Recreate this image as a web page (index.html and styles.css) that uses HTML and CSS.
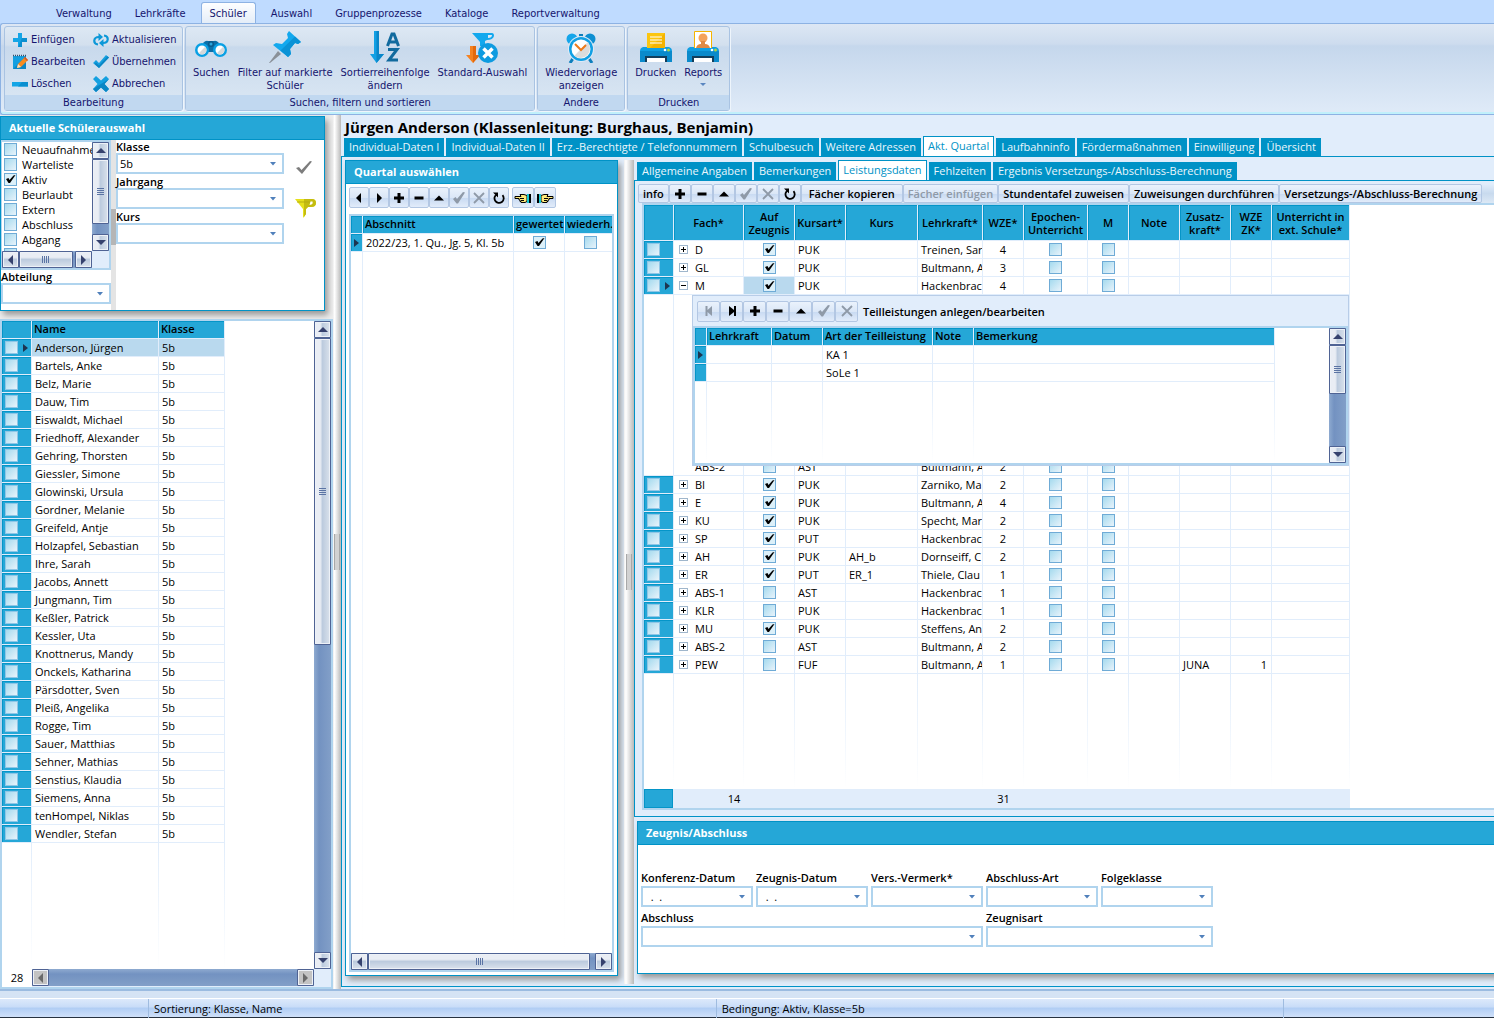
FILE: index.html
```html
<!DOCTYPE html>
<html lang="de">
<head>
<meta charset="utf-8">
<title>Schülerverwaltung</title>
<link rel="stylesheet" href="styles.css">
</head>
<body>
<svg class="defs" width="0" height="0" aria-hidden="true">
  <symbol id="i-plus" viewBox="0 0 12 12"><path d="M4.500 1h3v3.500H11v3H7.500V11h-3V7.500H1v-3h3.500z" fill="currentColor"/></symbol>
  <symbol id="i-minus" viewBox="0 0 12 12"><path d="M1.500 4.500h9v3h-9z" fill="currentColor"/></symbol>
  <symbol id="i-prev" viewBox="0 0 12 12"><path d="M8 1v10L3 6z" fill="currentColor"/></symbol>
  <symbol id="i-next" viewBox="0 0 12 12"><path d="M4 1v10l5-5z" fill="currentColor"/></symbol>
  <symbol id="i-first" viewBox="0 0 12 12"><path d="M2.500 1h2v4L9 1v10L4.500 7v4h-2z" fill="currentColor"/></symbol>
  <symbol id="i-last" viewBox="0 0 12 12"><path d="M10 1H8v4L3 1v10l5-4v4h2z" fill="currentColor"/></symbol>
  <symbol id="i-up" viewBox="0 0 12 12"><path d="M1 8.500h10L6 3.500z" fill="currentColor"/></symbol>
  <symbol id="i-check" viewBox="0 0 12 12"><path d="M0 7l2.500-2 1.500 2L10 0l2 .5L5 11.500H3.500z" fill="currentColor"/></symbol>
  <symbol id="i-cross" viewBox="0 0 12 12"><path d="M1 1l10 10M11 1L1 11" stroke="currentColor" stroke-width="1.800" fill="none"/></symbol>
  <symbol id="i-refresh" viewBox="0 0 12 12"><path d="M4 2.200A4.600 4.600 0 1 0 9.500 3.200" stroke="currentColor" stroke-width="1.800" fill="none"/><path d="M0 .5h5v5z" fill="currentColor"/></symbol>
  <symbol id="i-hand" viewBox="0 0 18 12"><path d="M1 4.500h6L6 2.500h4l3 1v6l-2 1H7V9.500H6V8H5V6.500H1z" fill="#ffe97a" stroke="#000"/><path d="M6 6.500h4M7 8.500h3" stroke="#000"/><path d="M13 2h2v9h-2z" fill="#17c9d4"/><path d="M15 2h2v9h-2z" fill="#000"/></symbol>
</svg>

<header class="ribbon">
  <nav class="ribbon-tabs" aria-label="Hauptmenü">
    <a href="#">Verwaltung</a><a href="#">Lehrkräfte</a><a href="#" class="active">Schüler</a><a href="#">Auswahl</a><a href="#">Gruppenprozesse</a><a href="#">Kataloge</a><a href="#">Reportverwaltung</a>
  </nav>
  <div class="ribbon-body">
    <section class="group">
      <div class="small-buttons">
        <button><svg viewBox="0 0 16 16"><path d="M6 1h4v5h5v4h-5v5H6v-5H1V6h5z" fill="#14a5e6"/><path d="M10 6h5v4h-5v5H6z" fill="#0a8fd0"/></svg>Einfügen</button>
        <button><svg viewBox="0 0 16 16"><path d="M5 12.500Q1 12 1.300 8.500T6 5M11 3.500q4 .5 3.700 4T10 11" fill="none" stroke="#0d98d8" stroke-width="2.200"/><path d="M5.500 1L10 5 5.500 9zM10.500 7L6 11l4.500 4z" fill="#0d98d8"/></svg>Aktualisieren</button>
        <button><svg viewBox="0 0 16 16"><path d="M1 2h13v13H1z" fill="#149fe0"/><path d="M1 15L14 2v13z" fill="#0a86c6"/><path d="M1 1.500h13" stroke="#35506b" stroke-width="1.500" stroke-dasharray="1 1"/><path d="M5 14l1-4 7-7 3 3-7 7z" fill="#f68b1f"/><path d="M5 14l1-4 3 3z" fill="#fde3c0"/><path d="M12 4l1-1 3 3-1 1z" fill="#d4552a"/></svg>Bearbeiten</button>
        <button><svg viewBox="0 0 16 16"><path d="M0 9l3-3 3 3 7-8 3 2.500L6 14z" fill="#14a0e0"/><path d="M6 14l10-10.500-1.500-1.200L6 11.500 3 8.500 1.500 10z" fill="#0b86c4"/></svg>Übernehmen</button>
        <button><svg viewBox="0 0 16 16"><path d="M0 6h16v4.500H0z" fill="#14a5e6"/><path d="M10 6h6v4.500H6z" fill="#0a8fd0"/></svg>Löschen</button>
        <button><svg viewBox="0 0 16 16"><path d="M3 0l5 4.500L13 0l3 3-4.500 5L16 13l-3 3-5-4.500L3 16l-3-3 4.500-5L0 3z" fill="#14a0e0"/><path d="M16 3l-4.500 5L16 13l-3 3-5-4.500L3 16l-3-3z" fill="#0b86c4"/></svg>Abbrechen</button>
      </div>
      <h2>Bearbeitung</h2>
    </section>
    <section class="group">
      <div class="big-buttons">
        <button><svg viewBox="0 0 32 32"><path d="M8 12q3-3 5-2h6q2-1 5 2l-3 9h-10z" fill="#0c6fa8"/><circle cx="16" cy="13" r="3" fill="#0a5b8c"/><circle cx="16" cy="13" r="1.500" fill="#2ba6df"/><circle cx="7" cy="19" r="7" fill="#0aa0e4"/><circle cx="25" cy="19" r="7" fill="#0aa0e4"/><circle cx="7" cy="19" r="4.500" fill="#fff"/><circle cx="25" cy="19" r="4.500" fill="#fff"/><path d="M10.200 15.800a4.500 4.500 0 0 1-6.400 6.400zM28.200 15.800a4.500 4.500 0 0 1-6.400 6.400z" fill="#d5d8da"/></svg>Suchen</button>
        <button><svg viewBox="0 0 32 32"><path d="M9 20l3 3L1 32H0z" fill="#8a9098"/><path d="M20 0l12 11-3 2-3-1-5 6 1 5-3 3L4 14l3-2 6 1 6-6-1-4z" fill="#12a8ee"/><path d="M26 5.500L32 11l-3 2-3-1-5 6 1 5-3 3-7.500-6.500z" fill="#0a92d6"/></svg>Filter auf markierte<br>Schüler</button>
        <button><svg viewBox="0 0 32 32"><path d="M5 0h5v23h5L7.500 32 1 23h4z" fill="#12a0e4"/><path d="M7.500 0H10v23h5L7.500 32z" fill="#0a86c8"/><path d="M18.500 15l4.500-12h2l4.500 12M20.500 11h7" fill="none" stroke="#116a9e" stroke-width="3"/><path d="M19 18.500h9L20 29h9" fill="none" stroke="#116a9e" stroke-width="3"/></svg>Sortierreihenfolge<br>ändern</button>
        <button><svg viewBox="0 0 32 32"><path d="M6 2h20q2 0 2 3-1 4-7 4l-2 1v5h-5v-4z" fill="#12a8ee"/><path d="M22 4h4q0 3-4 3z" fill="#dce7f5"/><path d="M4 15h6v9h4l-7 8-7-8h4z" fill="#f58220"/><path d="M7 15h3v9h4l-7 8z" fill="#e3690c"/><circle cx="22" cy="22" r="10" fill="#0e9be0"/><path d="M17.500 17.500l9 9M26.500 17.500l-9 9" stroke="#fff" stroke-width="3.500"/></svg>Standard-Auswahl</button>
      </div>
      <h2>Suchen, filtern und sortieren</h2>
    </section>
    <section class="group">
      <div class="big-buttons">
        <button><svg viewBox="0 0 32 32"><circle cx="7" cy="8" r="5.500" fill="#14a5ea"/><circle cx="25" cy="8" r="5.500" fill="#0d8fd2"/><path d="M14 3h4v4h-4z" fill="#0d7fbd"/><path d="M5 32l4-6M27 32l-4-6" stroke="#0d7fbd" stroke-width="3"/><circle cx="16" cy="18" r="13" fill="#dfeaf6"/><circle cx="16" cy="18" r="12" fill="#12a0e4"/><circle cx="16" cy="18" r="9.500" fill="#fff"/><path d="M22.700 11.300a9.500 9.500 0 0 1-13.400 13.400z" fill="#dcdcdc"/><path d="M10 13l6 6 5-5" fill="none" stroke="#ee7a1a" stroke-width="2"/></svg>Wiedervorlage<br>anzeigen</button>
      </div>
      <h2>Andere</h2>
    </section>
    <section class="group">
      <div class="big-buttons">
        <button><svg viewBox="0 0 32 32"><path d="M7 2h18v18H7z" fill="#fbc50f"/><path d="M25 2v18H7z" fill="#f5b400"/><path d="M10 6h12M10 9h12M10 12h12" stroke="#fff" stroke-width="1.200"/><path d="M3 16h4v-3.500V17h18v-4.500V16h4q3 1 3 4v11H0V20q0-3 3-4z" fill="#0f9fe2"/><path d="M0 20h32v11H0z" fill="#0a8acb"/><path d="M5 25h22v6H5z" fill="#123e5c"/><path d="M7 27h18v4H7z" fill="#fff"/><circle cx="25" cy="19" r="1.300" fill="#fff"/><circle cx="28.500" cy="19" r="1.500" fill="#a9d64a"/></svg>Drucken</button>
        <button><svg viewBox="0 0 32 32"><path d="M7.500.5h17v19h-17z" fill="#fff" stroke="#f5b400"/><circle cx="16" cy="7" r="4.500" fill="#f4a35c"/><path d="M9 17q1-4 5-4v-3h4v3q4 0 5 4z" fill="#e08a44"/><path d="M3 16h4v1h18v-1h4q3 1 3 4v11H0V20q0-3 3-4z" fill="#0f9fe2"/><path d="M0 20h32v11H0z" fill="#0a8acb"/><path d="M5 25h22v6H5z" fill="#123e5c"/><path d="M7 27h18v4H7z" fill="#fff"/><circle cx="25" cy="19" r="1.300" fill="#fff"/><circle cx="28.500" cy="19" r="1.500" fill="#a9d64a"/></svg>Reports<i class="caret"></i></button>
      </div>
      <h2>Drucken</h2>
    </section>
  </div>
</header>

<main class="workspace">
  <aside class="sidebar">
    <section class="panel selection">
      <h2 class="panel-title">Aktuelle Schülerauswahl</h2>
      <div class="selection-body">
        <div class="status-filter">
          <div class="status-box">
            <div class="status-top">
              <div class="status-list">
                <label><input type="checkbox">Neuaufnahme</label>
                <label><input type="checkbox">Warteliste</label>
                <label><input type="checkbox" checked>Aktiv</label>
                <label><input type="checkbox">Beurlaubt</label>
                <label><input type="checkbox">Extern</label>
                <label><input type="checkbox">Abschluss</label>
                <label><input type="checkbox">Abgang</label>
                <label><input type="checkbox" aria-label="Weitere"></label>
              </div>
              <div class="sb v"><i class="arrow up"></i><div class="track"><i class="thumb" style="height:87%"></i></div><i class="arrow down"></i></div>
            </div>
            <div class="sb h"><i class="arrow left"></i><div class="track"><i class="thumb" style="width:96%"></i></div><i class="arrow right"></i></div>
          </div>
          <label class="field"><span>Abteilung</span><select><option></option></select></label>
        </div>
        <div class="grip"></div>
        <div class="class-filter">
          <label class="field"><span>Klasse</span><select><option>5b</option></select></label>
          <label class="field"><span>Jahrgang</span><select><option></option></select></label>
          <label class="field"><span>Kurs</span><select><option></option></select></label>
        </div>
        <div class="filter-actions">
          <button aria-label="Anwenden"><svg width="18" height="16" viewBox="0 0 18 16"><path d="M1 8l3-1 2.500 3L15 1l2 .5L7 14z" fill="#7d7d7d"/></svg></button>
          <button aria-label="Filter"><svg width="22" height="20" viewBox="0 0 22 20"><path d="M0 1h17q4 0 4 4t-5 4h-3l-2 2v5l-3 4v-9z" fill="#e6e01c"/><path d="M9 1h8q4 0 4 4t-5 4h-3l-2 2v5l-2 3z" fill="#c4bc10"/><path d="M15.500 3.500h2q1 2-1 3l-2 .5z" fill="#fff"/><path d="M2 4h13" stroke="#b5ad10"/></svg></button>
        </div>
      </div>
    </section>
    <section class="student-grid">
      <div class="student-main">
        <div class="student-scroll">
          <table class="grid students">
            <colgroup><col class="w30"><col class="w127"><col class="w66"></colgroup>
            <thead><tr><th></th><th>Name</th><th>Klasse</th></tr></thead>
            <tbody id="students"></tbody>
          </table>
          <div class="fade students-fade"><i></i><i></i><i></i></div>
        </div>
        <div class="sb v"><i class="arrow up"></i><div class="track"><i class="thumb" style="height:50%"></i></div><i class="arrow down"></i></div>
      </div>
      <div class="student-foot"><output>28</output><div class="sb h disabled"><i class="arrow left"></i><div class="track"></div><i class="arrow right"></i></div></div>
    </section>
  </aside>
  <div class="splitter"></div>

  <section class="detail">
    <h1>Jürgen Anderson (Klassenleitung: Burghaus, Benjamin)</h1>
    <nav class="tabs"><a href="#">Individual-Daten I</a><a href="#">Individual-Daten II</a><a href="#">Erz.-Berechtigte / Telefonnummern</a><a href="#">Schulbesuch</a><a href="#">Weitere Adressen</a><a href="#" class="active">Akt. Quartal</a><a href="#">Laufbahninfo</a><a href="#">Fördermaßnahmen</a><a href="#">Einwilligung</a><a href="#">Übersicht</a></nav>
    <div class="tab-page">
      <section class="panel quarter">
        <h2 class="panel-title">Quartal auswählen</h2>
        <div class="quarter-body">
          <div class="toolbar narrow">
            <button aria-label="Zurück"><svg><use href="#i-prev"/></svg></button><button aria-label="Weiter"><svg><use href="#i-next"/></svg></button><button aria-label="Neu"><svg><use href="#i-plus"/></svg></button><button aria-label="Löschen"><svg><use href="#i-minus"/></svg></button><button aria-label="Bearbeiten"><svg><use href="#i-up"/></svg></button><button disabled aria-label="Übernehmen"><svg><use href="#i-check"/></svg></button><button disabled aria-label="Abbrechen"><svg><use href="#i-cross"/></svg></button><button aria-label="Aktualisieren"><svg><use href="#i-refresh"/></svg></button>
            <span class="hands"><button aria-label="Voriges Quartal"><svg class="hand"><use href="#i-hand"/></svg></button><button aria-label="Nächstes Quartal"><svg class="hand flip"><use href="#i-hand"/></svg></button></span>
          </div>
          <div class="quarter-grid">
            <table class="grid">
              <colgroup><col class="w12"><col class="w151"><col class="w51"><col class="w51"></colgroup>
              <thead><tr><th></th><th>Abschnitt</th><th>gewertet</th><th>wiederh.</th></tr></thead>
              <tbody><tr><td class="mark current"></td><td>2022/23, 1. Qu., Jg. 5, Kl. 5b</td><td class="c"><input type="checkbox" checked aria-label="gewertet"></td><td class="c"><input type="checkbox" aria-label="wiederholt"></td></tr></tbody>
            </table>
            <div class="fade quarter-fade"><i></i><i></i><i></i></div>
            <div class="sb h"><i class="arrow left"></i><div class="track"><i class="thumb" style="width:98%"></i></div><i class="arrow right"></i></div>
          </div>
        </div>
      </section>
      <div class="splitter"></div>
      <div class="quarter-detail">
        <nav class="tabs"><a href="#">Allgemeine Angaben</a><a href="#">Bemerkungen</a><a href="#" class="active">Leistungsdaten</a><a href="#">Fehlzeiten</a><a href="#">Ergebnis Versetzungs-/Abschluss-Berechnung</a></nav>
        <div class="marks">
          <div class="toolbar wide">
            <button class="text">info</button><button aria-label="Neu"><svg><use href="#i-plus"/></svg></button><button aria-label="Löschen"><svg><use href="#i-minus"/></svg></button><button aria-label="Bearbeiten"><svg><use href="#i-up"/></svg></button><button disabled aria-label="Übernehmen"><svg><use href="#i-check"/></svg></button><button disabled aria-label="Abbrechen"><svg><use href="#i-cross"/></svg></button><button aria-label="Aktualisieren"><svg><use href="#i-refresh"/></svg></button><button class="text roomy">Fächer kopieren</button><button class="text" disabled>Fächer einfügen</button><button class="text">Stundentafel zuweisen</button><button class="text">Zuweisungen durchführen</button><button class="text">Versetzungs-/Abschluss-Berechnung</button>
          </div>
          <div class="marks-grid">
            <table class="grid subjects">
              <colgroup><col class="w30"><col class="w70"><col class="w51"><col class="w51"><col class="w72"><col class="w65"><col class="w41"><col class="w64"><col class="w41"><col class="w51"><col class="w51"><col class="w41"><col class="w78"></colgroup>
              <thead><tr><th></th><th>Fach*</th><th>Auf Zeugnis</th><th>Kursart*</th><th>Kurs</th><th>Lehrkraft*</th><th>WZE*</th><th>Epochen-Unterricht</th><th>M</th><th>Note</th><th>Zusatz-<br>kraft*</th><th>WZE ZK*</th><th>Unterricht in ext. Schule*</th></tr></thead>
              <tbody id="subjects"></tbody>
            </table>
            <div class="fade subjects-cols"><i></i><i></i><i></i><i></i><i></i><i></i><i></i><i></i><i></i><i></i><i></i><i></i><i></i></div>
            <div class="sum subjects-cols"><i></i><output>14</output><output class="hours">31</output></div>
          </div>
        </div>
        <section class="panel report">
          <h2 class="panel-title">Zeugnis/Abschluss</h2>
          <div class="report-fields">
            <label class="field"><span>Konferenz-Datum</span><select><option>&nbsp; . &nbsp;.</option></select></label>
            <label class="field"><span>Zeugnis-Datum</span><select><option>&nbsp; . &nbsp;.</option></select></label>
            <label class="field"><span>Vers.-Vermerk*</span><select><option></option></select></label>
            <label class="field"><span>Abschluss-Art</span><select><option></option></select></label>
            <label class="field"><span>Folgeklasse</span><select><option></option></select></label>
            <label class="field span3"><span>Abschluss</span><select><option></option></select></label>
            <label class="field span2"><span>Zeugnisart</span><select><option></option></select></label>
          </div>
        </section>
      </div>
    </div>
  </section>
</main>

<footer>
  <div class="strip"></div>
  <div class="statusbar"><span></span><span>Sortierung: Klasse, Name</span><span>Bedingung: Aktiv, Klasse=5b</span><span></span></div>
</footer>

<template id="parts">
  <div class="parts">
    <div class="toolbar parts-bar">
      <button disabled aria-label="Erste"><svg><use href="#i-first"/></svg></button><button aria-label="Letzte"><svg><use href="#i-last"/></svg></button><button aria-label="Neu"><svg><use href="#i-plus"/></svg></button><button aria-label="Löschen"><svg><use href="#i-minus"/></svg></button><button aria-label="Bearbeiten"><svg><use href="#i-up"/></svg></button><button disabled aria-label="Übernehmen"><svg><use href="#i-check"/></svg></button><button disabled aria-label="Abbrechen"><svg><use href="#i-cross"/></svg></button>
      <strong>Teilleistungen anlegen/bearbeiten</strong>
    </div>
    <div class="parts-body">
      <div class="parts-list">
        <table class="grid">
          <colgroup><col class="w12"><col class="w65"><col class="w51"><col class="w110"><col class="w41"><col class="w301"></colgroup>
          <thead><tr><th></th><th>Lehrkraft</th><th>Datum</th><th>Art der Teilleistung</th><th>Note</th><th>Bemerkung</th></tr></thead>
          <tbody><tr><td class="mark current"></td><td></td><td></td><td>KA 1</td><td></td><td></td></tr><tr><td class="mark"></td><td></td><td></td><td>SoLe 1</td><td></td><td></td></tr></tbody>
        </table>
        <div class="fade parts-fade"><i></i><i></i><i></i><i></i><i></i><i></i></div>
      </div>
      <div class="sb v"><i class="arrow up"></i><div class="track"><i class="thumb" style="height:49%"></i></div><i class="arrow down"></i></div>
    </div>
  </div>
</template>
<script src="app.js"></script>
</body>
</html>
```
FILE: app.js
```js
const students = ['Anderson, Jürgen', 'Bartels, Anke', 'Belz, Marie', 'Dauw, Tim', 'Eiswaldt, Michael', 'Friedhoff, Alexander', 'Gehring, Thorsten', 'Giessler, Simone', 'Glowinski, Ursula', 'Gordner, Melanie', 'Greifeld, Antje', 'Holzapfel, Sebastian', 'Ihre, Sarah', 'Jacobs, Annett', 'Jungmann, Tim', 'Keßler, Patrick', 'Kessler, Uta', 'Knottnerus, Mandy', 'Onckels, Katharina', 'Pärsdotter, Sven', 'Pleiß, Angelika', 'Rogge, Tim', 'Sauer, Matthias', 'Sehner, Mathias', 'Senstius, Klaudia', 'Siemens, Anna', 'tenHompel, Niklas', 'Wendler, Stefan'];

// Fach, auf Zeugnis, Kursart, Kurs, Lehrkraft, WZE, Zusatzkraft, WZE ZK
const subjects = [
  ['D', 1, 'PUK', '', 'Treinen, Sar', 4],
  ['GL', 1, 'PUK', '', 'Bultmann, A', 3],
  ['M', 1, 'PUK', '', 'Hackenbrac', 4],
  ['ABS-2', 0, 'AST', '', 'Bultmann, A', 2],
  ['BI', 1, 'PUK', '', 'Zarniko, Ma', 2],
  ['E', 1, 'PUK', '', 'Bultmann, A', 4],
  ['KU', 1, 'PUK', '', 'Specht, Mar', 2],
  ['SP', 1, 'PUT', '', 'Hackenbrac', 2],
  ['AH', 1, 'PUK', 'AH_b', 'Dornseiff, C', 2],
  ['ER', 1, 'PUT', 'ER_1', 'Thiele, Clau', 1],
  ['ABS-1', 0, 'AST', '', 'Hackenbrac', 1],
  ['KLR', 0, 'PUK', '', 'Hackenbrac', 1],
  ['MU', 1, 'PUK', '', 'Steffens, An', 2],
  ['ABS-2', 0, 'AST', '', 'Bultmann, A', 2],
  ['PEW', 0, 'FUF', '', 'Bultmann, A', 1, 'JUNA', 1]
];

const box = (label, on) => `<input type="checkbox" aria-label="${label}"${on ? ' checked' : ''}>`;

document.getElementById('students').innerHTML = students.map((name, i) =>
  `<tr class="${i ? '' : 'selected'}"><td class="mark${i ? '' : ' current'}">${box(name)}</td><td>${name}</td><td>5b</td></tr>`).join('');

document.getElementById('subjects').innerHTML = subjects.map((s, i) => {
  const open = i === 2, under = i === 3;
  const row = `<tr><td class="${under ? '' : 'mark'}${open ? ' current' : ''}">${under ? '' : box(s[0])}</td>` +
    `<td>${under ? '<i class="exp none"></i>' : `<i class="exp${open ? ' open' : ''}"></i>`}${s[0]}</td>` +
    `<td class="c${open ? ' focus' : ''}">${box('Auf Zeugnis', s[1])}</td><td>${s[2]}</td><td>${s[3]}</td><td>${s[4]}</td><td class="c">${s[5]}</td>` +
    `<td class="c">${box('Epochenunterricht')}</td><td class="c">${box('M')}</td><td></td><td>${s[6] || ''}</td><td class="r">${s[7] || ''}</td><td></td></tr>`;
  return row + (open ? '<tr class="expansion"><td></td><td colspan="12" id="expansion"></td></tr>' : '');
}).join('');

document.getElementById('expansion').append(document.getElementById('parts').content);
```
FILE: styles.css
```css
* { box-sizing: border-box; }
:root {
  --blue: #25a7d7; --blue-dark: #0595c8; --tab: #0092c6; --line: #b0d4ee; --pale: #e1edfb;
}
body { margin: 0; min-height: 100vh; display: flex; flex-direction: column; background: var(--pale); color: #000; font: 11px/14px "Open Sans", sans-serif; overflow: hidden; }
h1, h2 { margin: 0; font-size: 11px; }
a { text-decoration: none; color: inherit; }
i { display: block; }
button { font: inherit; color: inherit; margin: 0; padding: 0; border: 0; background: none; }
.defs { position: absolute; }

/* Ribbon */
.ribbon { background: #bfdbff; color: #15156e; font-family: "DejaVu Sans Condensed", "Open Sans", sans-serif; height: 115px; display: flex; flex-direction: column; }
.ribbon-tabs { display: flex; gap: 7px; padding: 2px 0 0 48px; height: 24px; }
.ribbon-tabs a { padding: 5px 8px 0; white-space: nowrap; }
.ribbon-tabs .active { background: linear-gradient(#fdfeff, #e4edf8); border: 1px solid #8db2e3; border-bottom: 0; border-radius: 3px 3px 0 0; padding: 4px 8px 0; }
.ribbon-body { flex: 1; display: flex; gap: 2px; padding: 2px 3px 3px; background: linear-gradient(#dde7f4, #cddcee 20px, #c5d7ec 22px, #e0ebf8); border: 1px solid #8db2e3; border-right: 0; border-radius: 3px 0 0 3px; box-shadow: inset 0 -2px #c0f0fb; }
.group { display: flex; flex-direction: column; border: 1px solid #a9c3e2; border-radius: 3px; background: linear-gradient(#dde8f4, #d3e0ee 18px, #c8d9ec 20px, #dce8f4); box-shadow: 1px 1px #eef5fc; }
.group h2 { margin-top: auto; height: 15px; font-weight: 400; text-align: center; background: #c1d8f0; line-height: 15px; }
.small-buttons { display: grid; grid-template-columns: 81px 89px; grid-auto-rows: 22px; padding: 2px 0 0 7px; }
.small-buttons button { display: flex; align-items: center; gap: 3px; }
.small-buttons svg { width: 16px; height: 16px; }
.big-buttons { display: flex; padding: 4px 3px 0; }
.big-buttons button { display: flex; flex-direction: column; align-items: center; padding: 0 4px; line-height: 13px; white-space: nowrap; }
.big-buttons svg { width: 32px; height: 32px; margin-bottom: 3px; }
.caret { border: 3px solid transparent; border-top-color: #5a86c0; border-bottom: 0; margin-top: 4px; }

/* Layout */
.workspace { flex: 1; display: flex; min-height: 0; }
.sidebar { width: 333px; display: flex; flex-direction: column; background: #eee; padding-top: 1px; }
.splitter { width: 8px; display: grid; place-items: center; background: linear-gradient(90deg, #eee, #fff 20%, #b9b9b9); }
.splitter::before { content: ""; width: 4px; height: 36px; background: #d2d2d2; border-left: 1px solid #a8a8a8; border-right: 1px solid #a8a8a8; }
.detail { flex: 1; min-width: 0; display: flex; flex-direction: column; padding: 3px 0 2px; }
.detail h1 { font-size: 15px; line-height: 18px; padding-left: 4px; white-space: nowrap; }
.tabs { display: flex; gap: 2px; padding: 2px 3px 0; height: 20px; align-items: flex-end; white-space: nowrap; }
.tabs a { background: var(--tab); color: #eaf6fc; padding: 0 5px; height: 18px; line-height: 18px; }
.tabs .active { background: #fff; color: var(--tab); border: 1px solid var(--tab); border-bottom: 0; height: 20px; padding: 0 4px; }
.tab-page { flex: 1; min-height: 0; display: flex; border: 1px solid var(--tab); border-right: 0; padding: 3px 0 10px 3px; overflow: hidden; }
.panel { background: #fff; border: 1px solid var(--tab); box-shadow: 3px 4px 6px #999; }
.panel-title { background: var(--blue); color: #fff; border-bottom: 1px solid var(--tab); height: 23px; line-height: 22px; padding-left: 8px; }

/* Inputs */
input[type=checkbox] { appearance: none; width: 13px; height: 13px; margin: 0; flex: none; border: 1px solid #6fabd6; background: linear-gradient(135deg, #a5daee, #e8f3fb); vertical-align: top; }
input[type=checkbox]:checked { background: #dcf0f9 url("data:image/svg+xml,%3Csvg xmlns='http://www.w3.org/2000/svg' viewBox='0 0 11 11'%3E%3Cpath d='M1 5l2.500-1 1 2L8.500 1.500l2-.5L5 9H3.500z'/%3E%3C/svg%3E") center/11px no-repeat; }
.field { display: block; font-weight: 600; }
.field span { display: block; height: 12px; line-height: 12px; }
select { appearance: none; display: block; width: 100%; height: 21px; border: 2px solid var(--line); border-radius: 0; margin: 0; padding: 0 2px; color: #000; font: 11px "Open Sans", sans-serif; background: #fff url("data:image/svg+xml,%3Csvg xmlns='http://www.w3.org/2000/svg' viewBox='0 0 6 4'%3E%3Cpath d='M0 0h6L3 3.500z' fill='%235080bb'/%3E%3C/svg%3E") right 6px center/6px 4px no-repeat; }

/* Scroll bars */
.sb { display: flex; background: linear-gradient(90deg, #8eaad0, #7392c1 30%, #829fc8); flex: none; }
.sb.v { width: 17px; flex-direction: column; }
.sb.h { height: 17px; background: linear-gradient(#8eaad0, #7392c1 30%, #829fc8); }
.track { flex: 1; }
.arrow, .thumb { border: 1px solid #4f6394; border-radius: 1px; background: linear-gradient(90deg, #e9edf4 35%, #bccbde 50%, #dae2ec); box-shadow: inset 0 0 0 1px #edf1f7; }
.sb.h .arrow, .sb.h .thumb { background: linear-gradient(#e9edf4 35%, #bccbde 50%, #dae2ec); }
.sb.h .thumb { height: 100%; }
.thumb, .arrow { display: grid; place-items: center; }
.arrow { width: 17px; height: 17px; flex: none; }
.arrow::before { content: ""; border: 5px solid transparent; }
.arrow.up::before { border-bottom-color: #36426e; border-top: 0; }
.arrow.down::before { border-top-color: #36426e; border-bottom: 0; }
.arrow.left::before { border-right-color: #36426e; border-left: 0; }
.arrow.right::before { border-left-color: #36426e; border-right: 0; }
.thumb::before { content: ""; width: 7px; height: 7px; background: repeating-linear-gradient(#5b74a4 0 1px, transparent 1px 2px); }
.sb.h .thumb::before { background: repeating-linear-gradient(90deg, #5b74a4 0 1px, transparent 1px 2px); }
.sb.h.disabled .arrow { background: #c3c3c3; }
.sb.h.disabled .arrow::before { filter: grayscale(1) opacity(.7); }

/* Student selection */
.selection { width: 325px; height: 195px; display: flex; flex-direction: column; }
.selection .panel-title { flex: none; }
.selection-body { flex: 1; display: flex; }
.status-filter { width: 110px; display: flex; flex-direction: column; gap: 1px; }
.status-box { border: 2px solid var(--line); background: var(--pale); height: 130px; border-left-width: 1px; }
.status-top { display: flex; height: 109px; background: #fff; }
.status-list { flex: 1; overflow: hidden; padding: 1px 2px; }
.status-list label { display: flex; gap: 5px; height: 15px; line-height: 14px; white-space: nowrap; }
.status-box .sb.h { width: 90px; }
.grip { width: 5px; background: linear-gradient(#e4e4e4 69px, #b5b5b5 69px 105px, #e4e4e4 105px); }
.class-filter { width: 168px; display: flex; flex-direction: column; gap: 2px; padding-top: 1px; }
.filter-actions { display: flex; flex-direction: column; gap: 20px; padding: 20px 0 0 11px; }
.filter-actions button { height: 18px; text-align: left; }

/* Grids */
.grid { table-layout: fixed; border-spacing: 0; width: 0; }
.grid th, .grid td { padding: 0 0 0 3px; height: 18px; border: solid var(--pale); border-width: 0 1px 1px 0; overflow: hidden; white-space: nowrap; text-align: left; background: #fff; line-height: 16px; }
.grid th { background: var(--blue); box-shadow: inset 1px 1px var(--blue-dark); padding-left: 2px; font-weight: 600; vertical-align: top; }
.grid td.mark { background: var(--blue); box-shadow: inset 1px 1px var(--blue-dark); }
.grid td.current { background: var(--blue) url("data:image/svg+xml,%3Csvg xmlns='http://www.w3.org/2000/svg' viewBox='0 0 5 8'%3E%3Cpath d='M0 0l5 4-5 4z' fill='%231d3550'/%3E%3C/svg%3E") right 3px center/5px 8px no-repeat; }
.grid .c { text-align: center; padding: 0; }
.grid .r { text-align: right; padding-right: 4px; }
.grid td input { margin-top: 1px; }
.grid td.mark input { border-color: #8fc6e6; }
.grid .selected td:not(.mark) { background: #b9d9ee; }
.grid td.focus { background: #b9d9ee; }
.w12 { width: 12px; } .w30 { width: 30px; } .w41 { width: 41px; } .w51 { width: 51px; } .w64 { width: 64px; }
.w65 { width: 65px; } .w66 { width: 66px; } .w70 { width: 70px; } .w72 { width: 72px; } .w78 { width: 78px; } .w110 { width: 110px; }
.w127 { width: 127px; } .w151 { width: 151px; } .w301 { width: 301px; }
.fade { flex: 1; display: grid; }
.fade i { background: linear-gradient(var(--pale), #fff) right/1px 100% no-repeat; }
.students-fade { grid-template-columns: 30px 127px 66px; }
.quarter-fade { grid-template-columns: 12px 151px 51px; }
.parts-fade { grid-template-columns: 12px 65px 51px 110px 41px 301px; }
.subjects-cols { grid-template-columns: 30px 70px 51px 51px 72px 65px 41px 64px 41px 51px 51px 41px 78px; }

.student-grid { flex: 1; min-height: 0; display: flex; flex-direction: column; margin-top: 8px; border: 2px solid var(--line); background: #fff; }
.student-main { flex: 1; min-height: 0; display: flex; }
.student-scroll { flex: 1; min-width: 0; display: flex; flex-direction: column; }
.student-foot { display: flex; background: var(--pale); }
.student-foot output { width: 30px; text-align: center; line-height: 18px; background: #fff; }
.student-foot .sb { flex: 1; margin-right: 17px; }

/* Quarter panel */
.quarter { width: 273px; display: flex; flex-direction: column; }
.quarter-body { flex: 1; display: flex; flex-direction: column; gap: 6px; padding: 3px; min-height: 0; }
.quarter-grid { flex: 1; display: flex; flex-direction: column; border: 2px solid var(--line); overflow: hidden; }
.tab-page > .splitter { width: 10px; margin-left: 6px; margin-bottom: -8px; }
.toolbar { display: flex; }
.toolbar button { width: 22px; height: 20px; display: grid; place-items: center; border: 1px solid #b3c7e3; border-radius: 2px; background: linear-gradient(#eaf2fc, #dbe7f7 50%, #c8daf2 52%, #e2ecfa); font-weight: 600; white-space: nowrap; }
.toolbar svg { width: 12px; height: 12px; }
.toolbar button:disabled { color: #8f9aa8; }
.toolbar .text { width: auto; padding: 0 4px; }
.toolbar .roomy { padding: 0 7px; }
.toolbar.narrow button { width: 20px; height: 21px; }
.toolbar .hands { display: flex; margin-left: 3px; }
.toolbar.narrow .hands button { width: 22px; }
.toolbar svg.hand { width: 18px; }
.flip { transform: scaleX(-1); }

/* Marks */
.quarter-detail { flex: 1; min-width: 0; display: flex; flex-direction: column; }
.marks { flex: 1; display: flex; flex-direction: column; border: 1px solid var(--tab); border-right: 0; padding: 3px 0 6px 3px; min-height: 0; }
.wide { background: linear-gradient(#e1edfb, #c8daee 50%, #dce8f5); }
.toolbar.wide button { height: 19px; }
.marks-grid { flex: 1; display: flex; flex-direction: column; margin-left: 4px; border: 2px solid var(--line); border-right: 0; background: #fff; }
.subjects > thead th { height: 36px; line-height: 13px; white-space: normal; text-align: center; padding: 0; vertical-align: middle; }
.exp { display: inline-block; width: 9px; height: 9px; margin: 0 7px 0 2px; border: 1px solid #9fb6cc; background: linear-gradient(#000, #000) center/5px 1px no-repeat, linear-gradient(#000, #000) center/1px 5px no-repeat, #fff; }
.exp.open { background: linear-gradient(#000, #000) center/5px 1px no-repeat, #fff; }
.exp.none { visibility: hidden; }
.grid .expansion > td { height: 163px; padding: 0; vertical-align: top; overflow: visible; border-bottom: 0; }
.grid #expansion { position: relative; }
.parts { position: absolute; top: 0; left: 18px; right: 0; height: 171px; display: flex; flex-direction: column; background: var(--pale); border: 1px solid #b8cde8; }
.parts-bar { height: 30px; padding: 4px; align-items: center; }
.parts-bar button { width: 23px; height: 21px; }
.parts-bar strong { font-weight: 600; margin-left: 5px; line-height: 20px; align-self: flex-end; }
.parts-body { flex: 1; min-height: 0; display: flex; justify-content: space-between; border: 2px solid var(--line); background: #fff; }
.parts-list { display: flex; flex-direction: column; }
.sum { display: grid; height: 19px; line-height: 19px; text-align: center; background: linear-gradient(var(--pale), var(--pale)) left/706px 100% no-repeat; }
.sum i { background: var(--blue); border: 1px solid var(--blue-dark); margin-right: 1px; }
.sum output { grid-column: 2; padding-left: 50px; }
.sum .hours { grid-column: 7; padding: 0; }

/* Certificate fields */
.report { height: 153px; margin: 4px -8px 2px 3px; flex: none; }
.report-fields { display: grid; grid-template-columns: repeat(5, 112px); gap: 5px 3px; padding: 27px 3px; }
.report .field span { height: 14px; }
.span3 { grid-column: span 3; }
.span2 { grid-column: span 2; }

/* Footer */
.strip { height: 10px; background: #d5e3f4; border-top: 2px solid #9bbbe0; border-bottom: 1px solid #fff; }
.statusbar { height: 19px; display: grid; grid-template-columns: 148px 38% 38% 1fr; background: linear-gradient(#dce9fb, #c8dcf8 45%, #b0cdf4 50%, #cfe0f9); border-bottom: 1px solid #26313f; }
.statusbar span { padding-left: 5px; line-height: 19px; border-left: 1px solid #9fbce0; }
.statusbar span:first-child { border: 0; }
```
